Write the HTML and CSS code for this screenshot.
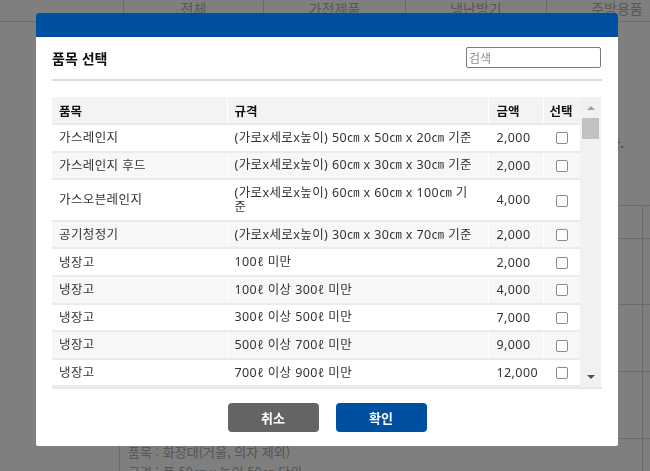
FILE: index.html
```html
<!DOCTYPE html>
<html lang="ko">
<head>
<meta charset="utf-8">
<title>품목 선택</title>
<link rel="stylesheet" href="styles.css">
</head>
<body>
<div class="page">
  <div class="tabs">
    <div class="tab-spacer"></div>
    <div class="tab w140">전체</div>
    <div class="tab w142">가전제품</div>
    <div class="tab w141">냉난방기</div>
    <div class="tab w141">주방용품</div>
  </div>
  <p class="notice">※ 배출하실 품목을 정확히 선택하여 주시기 바랍니다.</p>
  <div class="grid">
    <div class="g-cell h34"></div><div class="g-cell bl h34"></div><div class="g-cell bl h34"></div>
    <div class="g-cell h66"></div><div class="g-cell bl h66"></div><div class="g-cell bl h66"></div>
    <div class="g-cell h67"></div><div class="g-cell bl h67"></div><div class="g-cell bl h67"></div>
    <div class="g-cell h67"></div><div class="g-cell bl h67"></div><div class="g-cell bl h67"></div>
    <div class="g-cell"></div>
    <div class="g-cell bl g-text">품목 : 화장대(거울, 의자 제외)<br>규격 : 폭 50㎝ x 높이 50㎝ 단위</div>
    <div class="g-cell bl"></div>
  </div>
</div>
<div class="overlay"></div>
<div class="modal">
  <div class="modal-head"></div>
  <div class="modal-body">
    <div class="title-row">
      <h2 class="title">품목 선택</h2>
      <input class="search" type="text" placeholder="검색">
    </div>
    <div class="table-box">
      <div class="table-scroll">
        <table class="items">
          <colgroup>
            <col class="c-name"><col class="c-spec"><col class="c-price"><col class="c-sel">
          </colgroup>
          <thead>
            <tr><th>품목</th><th>규격</th><th>금액</th><th>선택</th></tr>
          </thead>
          <tbody>
            <tr><td>가스레인지</td><td>(가로x세로x높이) 50㎝ x 50㎝ x 20㎝ 기준</td><td>2,000</td><td class="sel"><input type="checkbox" class="chk"></td></tr>
            <tr><td>가스레인지 후드</td><td>(가로x세로x높이) 60㎝ x 30㎝ x 30㎝ 기준</td><td>2,000</td><td class="sel"><input type="checkbox" class="chk"></td></tr>
            <tr><td>가스오븐레인지</td><td>(가로x세로x높이) 60㎝ x 60㎝ x 100㎝ 기<br>준</td><td>4,000</td><td class="sel"><input type="checkbox" class="chk"></td></tr>
            <tr><td>공기청정기</td><td>(가로x세로x높이) 30㎝ x 30㎝ x 70㎝ 기준</td><td>2,000</td><td class="sel"><input type="checkbox" class="chk"></td></tr>
            <tr><td>냉장고</td><td>100ℓ 미만</td><td>2,000</td><td class="sel"><input type="checkbox" class="chk"></td></tr>
            <tr><td>냉장고</td><td>100ℓ 이상 300ℓ 미만</td><td>4,000</td><td class="sel"><input type="checkbox" class="chk"></td></tr>
            <tr><td>냉장고</td><td>300ℓ 이상 500ℓ 미만</td><td>7,000</td><td class="sel"><input type="checkbox" class="chk"></td></tr>
            <tr><td>냉장고</td><td>500ℓ 이상 700ℓ 미만</td><td>9,000</td><td class="sel"><input type="checkbox" class="chk"></td></tr>
            <tr><td>냉장고</td><td>700ℓ 이상 900ℓ 미만</td><td>12,000</td><td class="sel"><input type="checkbox" class="chk"></td></tr>
          </tbody>
        </table>
      </div>
      <div class="scrollbar">
        <div class="sb-btn"><span class="arrow-up"></span></div>
        <div class="sb-thumb"></div>
        <div class="sb-track"></div>
        <div class="sb-btn"><span class="arrow-down"></span></div>
      </div>
    </div>
    <div class="actions">
      <button class="btn btn-cancel" type="button">취소</button>
      <button class="btn btn-ok" type="button">확인</button>
    </div>
  </div>
</div>
</body>
</html>
```
FILE: styles.css
```css
* { box-sizing: border-box; }
html, body {
  margin: 0;
  padding: 0;
  width: 650px;
  height: 471px;
  overflow: hidden;
  background: #fff;
  font-family: "Noto Sans", "Noto Sans CJK KR", sans-serif;
}

/* background page */
.page {
  width: 650px;
  height: 471px;
  overflow: hidden;
  color: #b0b0b0;
  font-size: 13px;
  font-family: "Noto Sans CJK KR", sans-serif;
}
.tabs {
  display: flex;
  height: 22px;
  border-bottom: 1px solid #d6d6d6;
  width: 760px;
}
.tab-spacer { width: 123px; flex: none; }
.tab {
  flex: none;
  border-left: 1px solid #d6d6d6;
  text-align: center;
  line-height: 16px;
  font-size: 14px;
}
.w140 { width: 140px; }
.w142 { width: 142px; }
.w141 { width: 141px; }
.notice {
  margin: 0;
  padding: 111px 26px 0 0;
  line-height: 20px;
  text-align: right;
  color: #e0505a;
}
.grid {
  margin: 52px 0 0 40px;
  width: 700px;
  display: grid;
  grid-template-columns: 79px 523px 1fr;
  border-top: 1px solid #d6d6d6;
}
.g-cell { border-bottom: 1px solid #d6d6d6; }
.bl { border-left: 1px solid #d6d6d6; }
.h34 { height: 33px; }
.h66 { height: 66px; }
.h67 { height: 67px; }
.g-text {
  padding: 3px 0 0 8px;
  line-height: 20px;
  color: #aaa;
}

.overlay {
  position: fixed;
  inset: 0;
  background: rgba(0, 0, 0, 0.5);
}

/* modal */
.modal {
  position: fixed;
  left: 36px;
  top: 13px;
  width: 582px;
  background: #fff;
  border-radius: 2px;
  overflow: hidden;
}
.modal-head {
  height: 24px;
  background: #0050a2;
}
.modal-body {
  padding: 0 16px 14px;
}
.title-row {
  display: flex;
  justify-content: space-between;
  align-items: center;
  padding: 10px 0 11px;
  border-bottom: 2px solid #dcdcdc;
}
.title {
  margin: 0;
  font-size: 14px;
  line-height: 20px;
  font-weight: 700;
  color: #111;
  font-family: "Noto Sans CJK KR", sans-serif;
}
.search {
  width: 135px;
  height: 21px;
  margin: 0 1px 0 0;
  border: 1px solid #7a7a7a;
  border-radius: 2px;
  padding: 0 2px;
  font-size: 12px;
  font-family: "Noto Sans CJK KR", sans-serif;
  outline: none;
}
.search::placeholder { color: #8c8c8c; }

.table-box {
  margin-top: 16px;
  display: flex;
  height: 292px;
  border-bottom: 2px solid #e8e8e8;
}
.table-scroll {
  width: 528px;
  height: 290px;
  overflow: hidden;
}
.items {
  width: 528px;
  border-collapse: collapse;
  table-layout: fixed;
  font-size: 12.5px;
  letter-spacing: 0.4px;
  color: #333;
}
.c-name { width: 175px; }
.c-spec { width: 261px; }
.c-price { width: 55px; }
.c-sel { width: 37px; }
.items th, .items td {
  text-align: left;
  vertical-align: middle;
  line-height: 15px;
  padding: 5.3px 7px;
  border-bottom: 2px solid #ebebeb;
  white-space: nowrap;
  overflow: hidden;
}
.items th + th, .items td + td { border-left: 1px solid #fff; }
.items th:nth-child(3), .items td:nth-child(3) { padding-left: 8px; padding-right: 0; }
.items th:nth-child(4) { padding-left: 6px; padding-right: 0; }
.items th {
  background: #f3f3f3;
  font-weight: 700;
  color: #111;
  letter-spacing: 0;
  padding-top: 5.5px;
  padding-bottom: 5.5px;
  font-family: "Noto Sans CJK KR", sans-serif;
}
.items td:nth-child(2) { line-height: 14px; }
.items tbody tr:nth-child(3) td { padding-top: 5.8px; padding-bottom: 5.8px; }
.items tbody tr:nth-child(even) td { background: #f7f7f7; }
.items td.sel { text-align: center; padding: 0; }
.chk {
  -webkit-appearance: none;
  appearance: none;
  display: inline-block;
  vertical-align: middle;
  width: 12px;
  height: 12px;
  margin: 0 0 1px 1px;
  border: 1px solid #8a8a8a;
  border-radius: 2px;
  background: #fff;
}

.scrollbar {
  width: 21px;
  height: 290px;
  background: #f1f1f1;
  display: flex;
  flex-direction: column;
  padding: 1px 2px 0;
}
.sb-btn {
  height: 20px;
  display: flex;
  align-items: center;
  justify-content: center;
  flex: none;
}
.sb-thumb {
  height: 21px;
  background: #c1c1c1;
  flex: none;
}
.sb-track { flex: 1; }
.arrow-up {
  width: 0;
  height: 0;
  border-left: 4px solid transparent;
  border-right: 4px solid transparent;
  border-bottom: 4px solid #a3a3a3;
}
.arrow-down {
  width: 0;
  height: 0;
  border-left: 4px solid transparent;
  border-right: 4px solid transparent;
  border-top: 4px solid #505050;
}

.actions {
  display: flex;
  justify-content: center;
  gap: 17px;
  margin-top: 14px;
}
.btn {
  width: 91px;
  height: 29px;
  border: none;
  border-radius: 4px;
  color: #fff;
  font-size: 13px;
  font-weight: 700;
  font-family: "Noto Sans CJK KR", sans-serif;
  padding: 0;
}
.btn-cancel { background: #646464; }
.btn-ok { background: #0050a2; }
```
